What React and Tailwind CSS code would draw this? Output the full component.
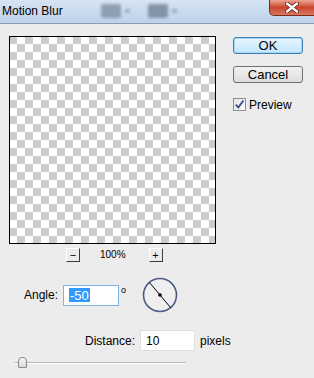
import React from "react";

const font = { fontFamily: '"Liberation Sans", Arial, sans-serif' };

const ZoomButton = ({ label }) => (
  <div className="w-[14px] h-[14px] flex items-center justify-center border border-t-white border-l-white border-r-[#3c3c3c] border-b-[#3c3c3c] bg-[#ececec] text-[11px] leading-none text-black">
    {label}
  </div>
);

const AngleDial = () => (
  <svg width="36" height="36" viewBox="0 0 36 36">
    <circle cx="18" cy="18" r="16.5" fill="#efefef" stroke="#4d5b86" strokeWidth="1.6" />
    <line x1="7.4" y1="5.4" x2="28.6" y2="30.6" stroke="#000" strokeWidth="1" />
    <circle cx="18" cy="18" r="1.8" fill="#000" />
  </svg>
);

const MotionBlurDialog = () => {
  return (
    <div className="w-[314px] h-[378px] overflow-hidden bg-[#ececec] flex flex-col" style={font}>
      {/* title bar */}
      <div className="h-[24px] shrink-0 flex items-start bg-linear-to-b from-[#d6e4f3] to-[#bed2e9] border-b border-[#8b9bb0]">
        <div className="pl-[2px] pt-[4px] text-[12px] leading-[15px] text-black">Motion Blur</div>
        <div className="ml-[38px] mt-[4px] flex items-center gap-[4px] blur-[1.5px] opacity-70">
          <div className="w-[20px] h-[14px] bg-[#75869c] rounded-[2px]" />
          <div className="w-[5px] h-[4px] bg-[#8e9cb0]" />
        </div>
        <div className="ml-[18px] mt-[4px] flex items-center gap-[4px] blur-[1.5px] opacity-70">
          <div className="w-[20px] h-[14px] bg-[#66778c] rounded-[2px]" />
          <div className="w-[5px] h-[4px] bg-[#8e9cb0]" />
        </div>
        <div className="ml-auto w-[45px] h-[16px] rounded-bl-[5px] border border-t-0 border-r-0 border-[#7d2a1e] bg-linear-to-b from-[#e9a593] via-[#c9452c] to-[#d9775f] flex items-center justify-center">
          <svg width="14" height="11" viewBox="0 0 14 11">
            <path d="M2 1.5 L12 9.5 M12 1.5 L2 9.5" stroke="#5a1c12" strokeWidth="4" strokeLinecap="round" />
            <path d="M2 1.5 L12 9.5 M12 1.5 L2 9.5" stroke="#ffffff" strokeWidth="2.4" strokeLinecap="round" />
          </svg>
        </div>
      </div>

      {/* preview + buttons */}
      <div className="flex pt-[12px]">
        <div className="ml-[9px] w-[207px] flex flex-col">
          <div className="h-[208px] border border-black bg-[image:conic-gradient(#ffffff_25%,#cccccc_0_50%,#ffffff_0_75%,#cccccc_0)] bg-[length:16px_16px] bg-[position:-1px_-1px]" />
          <div className="mt-[4px] h-[14px] flex items-center">
            <div className="ml-[57px]">
              <ZoomButton label="−" />
            </div>
            <div className="ml-[20px] text-[10px] leading-none text-black">100%</div>
            <div className="ml-[23px]">
              <ZoomButton label="+" />
            </div>
          </div>
        </div>

        <div className="ml-[17px] pt-[1px] flex flex-col">
          <button className="w-[70px] h-[17px] rounded-[3px] border border-[#3c7fb1] bg-linear-to-b from-[#eaf6fd] to-[#bee6fd] text-[13px] leading-none text-black flex items-center justify-center shadow-[inset_0_0_0_1px_#a9d8f5]">
            OK
          </button>
          <button className="mt-[12px] w-[70px] h-[17px] rounded-[3px] border border-[#707070] bg-linear-to-b from-[#f3f3f3] to-[#dcdcdc] text-[13px] leading-none text-black flex items-center justify-center">
            Cancel
          </button>
          <div className="mt-[15px] flex items-center">
            <div className="w-[13px] h-[13px] border border-[#8e8f8f] bg-linear-to-br from-[#e6e6e6] to-[#fbfbfb] flex items-center justify-center">
              <svg width="11" height="11" viewBox="0 0 11 11">
                <path d="M1.8 5.6 L4.3 8.6 L9.4 1.4" fill="none" stroke="#3a4f8c" strokeWidth="1.8" />
              </svg>
            </div>
            <span className="ml-[3px] text-[12px] leading-none text-black">Preview</span>
          </div>
        </div>
      </div>

      {/* angle */}
      <div className="mt-[15px] h-[36px] flex items-center">
        <span className="ml-[24px] text-[12px] text-black">Angle:</span>
        <div className="ml-[5px] w-[56px] h-[21px] border border-[#7eb4ea] bg-white flex items-center">
          <span className="ml-[5px] px-[1px] h-[14px] flex items-center bg-[#3399ff] text-white text-[13px] leading-none">-50</span>
        </div>
        <span className="ml-[2px] self-start mt-[9px] text-[9px] leading-none text-black">o</span>
        <div className="ml-[16px]">
          <AngleDial />
        </div>
      </div>

      {/* distance */}
      <div className="mt-[17px] h-[21px] flex items-center">
        <span className="ml-[85px] text-[12px] text-black">Distance:</span>
        <div className="ml-[5px] w-[55px] h-[21px] border border-[#dedede] bg-white flex items-center">
          <span className="ml-[5px] text-[12px] leading-none text-black">10</span>
        </div>
        <span className="ml-[5px] text-[12px] text-black">pixels</span>
      </div>

      {/* slider */}
      <div className="relative mt-[6px] ml-[15px] w-[171px] h-[11px]">
        <div className="absolute left-0 right-0 top-[5px] h-px bg-[#b4b4b4]" />
        <div className="absolute left-0 right-0 top-[6px] h-px bg-white" />
        <div className="absolute left-[3px] top-0 w-[9px] h-[11px] rounded-t-[4px] rounded-b-[1px] border border-[#8a8a8a] bg-linear-to-b from-[#f6f6f6] to-[#d8d8d8]" />
      </div>
    </div>
  );
};

export default MotionBlurDialog;
